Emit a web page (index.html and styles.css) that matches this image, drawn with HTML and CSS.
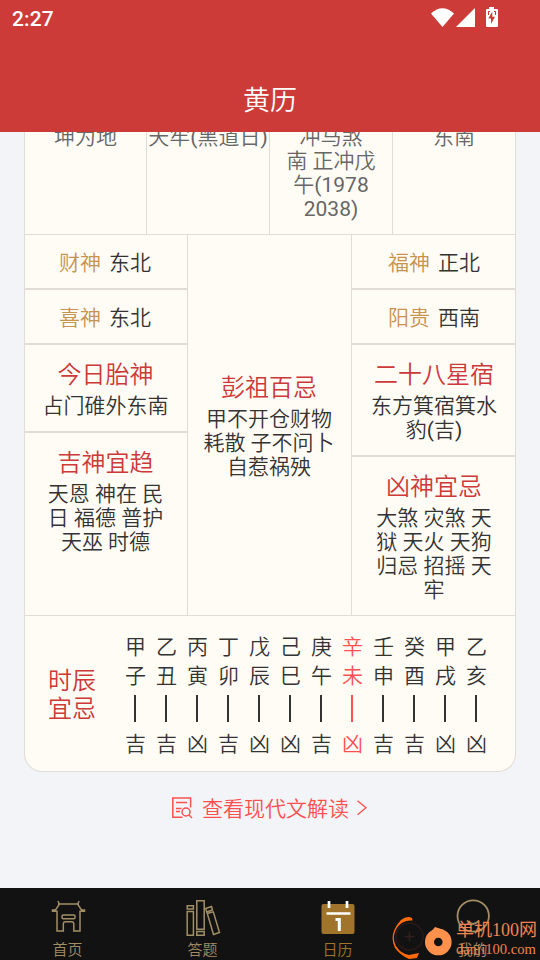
FILE: index.html
```html
<!DOCTYPE html>
<html lang="zh-CN">
<head>
<meta charset="utf-8">
<title>黄历</title>
<link rel="stylesheet" href="styles.css">
</head>
<body>
<header class="header">
  <div class="status">
    <span class="clock">2:27</span>
    <svg class="status-icons" width="70" height="22" viewBox="0 0 70 22" fill="#fff">
      <path d="M0 6.500Q11.500 -4 23 6.500L11.500 20Z"/>
      <path d="M44 1V20H25Z"/>
      <path fill-rule="evenodd" d="M58 0h5v2h3q1 0 1 1v16q0 1-1 1h-10q-1 0-1-1v-16q0-1 1-1h2zM61.300 4.500l-4 7h2.700v5.500l4-7.300h-2.700zM57 4v4h1v-3h1v-1zM65 4v4h-1v-3h-1v-1z"/>
    </svg>
  </div>
  <h1 class="title">黄历</h1>
</header>
<main class="content">
  <section class="card">
    <div class="summary">
      <div class="summary-cell">坤为地</div>
      <div class="summary-cell">天牢(黑道日)</div>
      <div class="summary-cell">冲马煞<br>南 正冲戊<br>午(1978<br>2038)</div>
      <div class="summary-cell">东南</div>
    </div>
    <div class="gods">
      <div class="column">
        <div class="cell pair"><span class="gold">财神</span><span>东北</span></div>
        <div class="cell pair"><span class="gold">喜神</span><span>东北</span></div>
        <div class="cell block"><h2>今日胎神</h2><p>占门碓外东南</p></div>
        <div class="cell block last"><h2>吉神宜趋</h2><p>天恩 神在 民<br>日 福德 普护<br>天巫 时德</p></div>
      </div>
      <div class="middle"><h2>彭祖百忌</h2><p>甲不开仓财物<br>耗散 子不问卜<br>自惹祸殃</p></div>
      <div class="column">
        <div class="cell pair"><span class="gold">福神</span><span>正北</span></div>
        <div class="cell pair"><span class="gold">阳贵</span><span>西南</span></div>
        <div class="cell block"><h2>二十八星宿</h2><p>东方箕宿箕水<br>豹(吉)</p></div>
        <div class="cell block last"><h2>凶神宜忌</h2><p>大煞 灾煞 天<br>狱 天火 天狗<br>归忌 招摇 天<br>牢</p></div>
      </div>
    </div>
    <div class="hours">
      <h2 class="hours-title">时辰<br>宜忌</h2>
      <div class="hour-list">
        <div class="hour"><span>甲</span><span>子</span><i></i><span>吉</span></div>
        <div class="hour"><span>乙</span><span>丑</span><i></i><span>吉</span></div>
        <div class="hour"><span>丙</span><span>寅</span><i></i><span>凶</span></div>
        <div class="hour"><span>丁</span><span>卯</span><i></i><span>吉</span></div>
        <div class="hour"><span>戊</span><span>辰</span><i></i><span>凶</span></div>
        <div class="hour"><span>己</span><span>巳</span><i></i><span>凶</span></div>
        <div class="hour"><span>庚</span><span>午</span><i></i><span>吉</span></div>
        <div class="hour now"><span>辛</span><span>未</span><i></i><span>凶</span></div>
        <div class="hour"><span>壬</span><span>申</span><i></i><span>吉</span></div>
        <div class="hour"><span>癸</span><span>酉</span><i></i><span>吉</span></div>
        <div class="hour"><span>甲</span><span>戌</span><i></i><span>凶</span></div>
        <div class="hour"><span>乙</span><span>亥</span><i></i><span>凶</span></div>
      </div>
    </div>
  </section>
  <a class="more">
    <svg class="more-icon" width="22" height="22" viewBox="0 0 22 22" fill="none" stroke="#fd5050" stroke-width="1.500">
      <path d="M11.500 20.200H1.800V1H19.600V10.500M5 5.600H16M5 11.500H10.500M5 14.500H9"/>
      <circle cx="15" cy="15" r="4"/>
      <path d="M17.800 17.800L21 21"/>
    </svg>
    <span>查看现代文解读</span>
    <svg class="chevron" width="12" height="16" viewBox="0 0 12 16" fill="none" stroke="#fd5050" stroke-width="1.300"><path d="M1.500 .8L10 7.800L1.500 14.800"/></svg>
  </a>
</main>
<nav class="tabs">
  <a class="tab">
    <svg width="36" height="40" viewBox="0 0 36 40" fill="none" stroke="#a28e65" stroke-width="1.500">
      <path d="M8 6H29M7.800 3L9.500 6L5.500 12H2.500V13.200H7V33H13.300V26Q13.300 23.800 15.500 23.800H21.600Q23.800 23.800 23.800 26V33H30V13.200H34.500V12H31.500L27.500 6L29.200 3"/>
      <rect x="12" y="17" width="13" height="3.700" rx="1.200"/>
    </svg>
    <span>首页</span>
  </a>
  <a class="tab">
    <svg width="36" height="40" viewBox="0 0 36 40" fill="none" stroke="#a28e65" stroke-width="1.500">
      <path d="M2.200 7.800h6.200v3.200H2.200zM2.200 13.600h6.200v23.600H2.200zM11.800 2.700h7.400v28.500H11.800zM11.800 33.500h7.400v3.800H11.800zM20.700 10.500l5.800-2 1 3.500-5.800 2zM22.300 15.500l6-1.600 6.200 20.600-6 2z"/>
    </svg>
    <span>答题</span>
  </a>
  <a class="tab active">
    <svg width="36" height="40" viewBox="0 0 36 40">
      <rect x="1.500" y="6" width="33" height="30" rx="2" fill="#a1742b"/>
      <path d="M9 3V10M27 3V10M6.500 15.500H30.500" fill="none" stroke="#fff" stroke-width="2.700"/>
      <path d="M15.500 21.500H19.300V33" fill="none" stroke="#fff" stroke-width="3"/>
    </svg>
    <span>日历</span>
  </a>
  <a class="tab">
    <svg width="36" height="40" viewBox="0 0 36 40" fill="none" stroke="#a28e65" stroke-width="1.800">
      <circle cx="18.200" cy="18" r="15.700"/>
      <path d="M12 22.500Q18 29.500 24 22.500"/>
    </svg>
    <span>我的</span>
  </a>
  <div class="watermark">
    <svg width="64" height="44" viewBox="0 0 64 44">
      <circle cx="17.500" cy="20.500" r="13.500" fill="none" stroke="#241918" stroke-width="2"/>
      <path d="M12.500 20.500h10M17.500 15.500v10" stroke="#30201d" stroke-width="1.500"/>
      <path d="M9 4Q15 -1 20 2L20.500 4.500Q11 3.500 5.500 11Q-1 21 4 30Q9 38 17 39L27 37L25 42L17 43Q8 39 3 32Q-4 18 9 4Z" fill="#ff6a0b"/>
      <circle cx="46.300" cy="26" r="8.800" fill="none" stroke="#ff914d" stroke-width="9"/>
      <path d="M38 17L43 11L52 14Z" fill="#ff914d"/>
    </svg>
    <div class="wm-text"><b>单机100网</b><small>danji100.com</small></div>
  </div>
</nav>
</body>
</html>
```

FILE: styles.css
```css
* { box-sizing: border-box; }
body {
  margin: 0;
  width: 540px;
  height: 960px;
  overflow: hidden;
  display: flex;
  flex-direction: column;
  background: #f3f4f7;
  color: #333;
  font: 21px/24px Roboto, "Noto Sans CJK SC DemiLight", "Noto Sans CJK SC", sans-serif;
}
h1, h2, p { margin: 0; font-weight: 400; }
.header { height: 132px; background: #cd3b39; color: #fff; }
.status { height: 38px; padding: 7px 39px 0 12px; display: flex; justify-content: space-between; }
.clock { font-weight: 500; letter-spacing: .1px; }
.title { margin-top: 44px; font-size: 27px; line-height: 38px; text-align: center; }
.content { height: 756px; overflow: hidden; padding: 0 24px; }
.card {
  height: 640px;
  background: #fffcf5;
  border: 1px solid #e3dcd6;
  border-top: 0;
  border-radius: 0 0 18px 18px;
}
.summary { height: 102px; display: grid; grid-template-columns: 121px 123px 123px 123px; color: #666; text-align: center; }
.summary-cell { margin-top: -7px; white-space: nowrap; }
.summary-cell + .summary-cell { border-left: 1px solid #e3dcd6; }
.gods {
  height: 382px;
  display: grid;
  grid-template-columns: 163px 163px 164px;
  border-top: 1px solid #e3dcd6;
  border-bottom: 1px solid #e3dcd6;
  text-align: center;
}
.column { display: flex; flex-direction: column; }
.column:first-child { border-right: 1px solid #e3dcd6; }
.column:last-child { border-left: 1px solid #e3dcd6; }
.column:first-child .cell { padding-right: 1px; }
.column:first-child .pair { padding-right: 2px; }
.column:last-child .cell { padding-left: 1px; }
.cell { border-bottom: 2px solid #e3dcd6; }
.cell.last { flex: 1; border-bottom: 0; }
.pair { height: 55px; padding-top: 16px; display: flex; justify-content: center; gap: 8px; }
.gold { color: #c8924f; }
.block { padding: 16px 0 13px; }
.block h2, .middle h2 { color: #cd3838; font-size: 24px; line-height: 28px; }
.block p, .middle p { margin-top: 5px; }
.middle { display: flex; flex-direction: column; justify-content: center; padding: 3px 1px 0 0; }
.hours { height: 155px; display: flex; align-items: center; padding: 5px 0 0 23px; }
.hours-title { width: 72px; margin-top: -2px; color: #cd3838; font-size: 24px; line-height: 28px; }
.hour-list { display: grid; grid-template-columns: repeat(12, 31px); }
.hour { display: flex; flex-direction: column; align-items: center; }
.hour span { height: 29px; line-height: 29px; }
.hour i { width: 2px; height: 27px; margin: 4px 2px 8px 0; background: #333; }
.hour.now { color: #fd5050; }
.hour.now i { background: #fd5050; }
.more { display: flex; align-items: center; justify-content: center; color: #fd5050; padding-top: 25px; margin-left: -1px; }
.more-icon { margin: -2px 9px 0 0; }
.chevron { margin: -2px 0 0 7px; }
.tabs { position: relative; height: 72px; display: grid; grid-template-columns: repeat(4, 135px); background: #121212; }
.tab { display: flex; flex-direction: column; align-items: center; padding-top: 10px; color: #a28e65; font-size: 15px; line-height: 24px; }
.tab.active { color: #a1742b; }
.watermark { position: absolute; left: 392px; top: 28px; display: flex; }
.wm-text { display: flex; flex-direction: column; color: #f18450; white-space: nowrap; margin-top: 3px; }
.wm-text b { font: 400 18px/22px "Liberation Serif", "Noto Sans CJK SC", serif; }
.wm-text small { font: 400 14.6px/16px "Liberation Serif", serif; }
```
